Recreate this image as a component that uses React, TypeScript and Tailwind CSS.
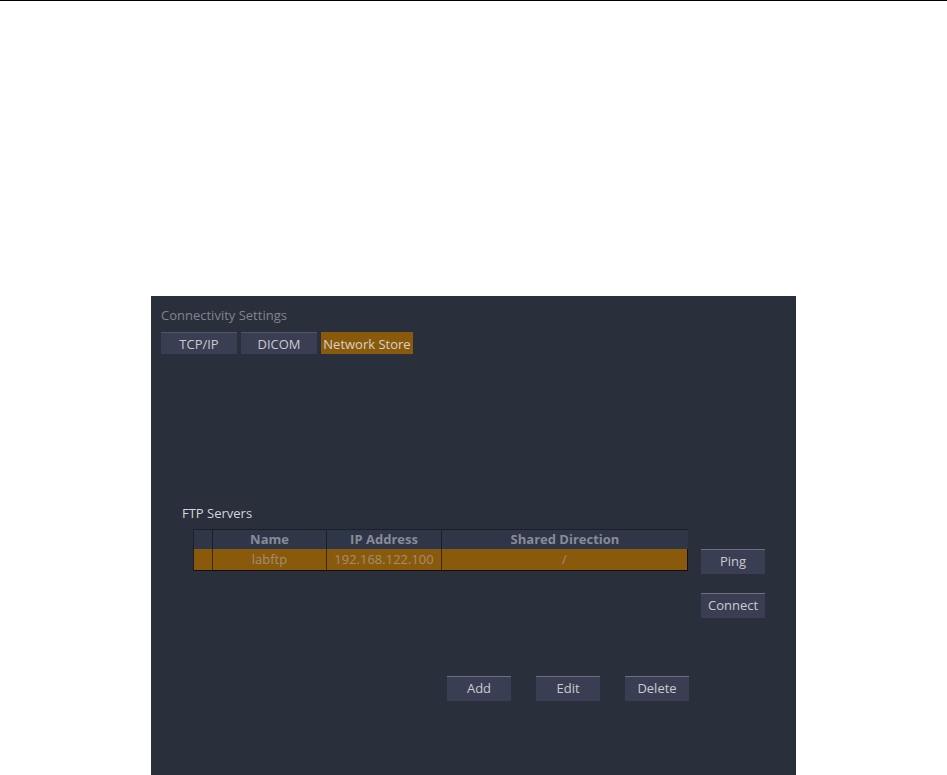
import React from 'react';

const font = { fontFamily: '"Open Sans", "Noto Sans", "Liberation Sans", sans-serif' };

// Flat Qt-style push button
const PanelButton = ({ label, className }: { label: string; className?: string }) => (
  <div
    className={`w-[64px] h-[25px] bg-[#393e52] border-t border-[#6b6f7f] flex items-center justify-center text-[13px] text-[#c9cbd1] ${className ?? ''}`}
  >
    {label}
  </div>
);

const Tab = ({ label, active, width }: { label: string; active?: boolean; width: string }) => (
  <div
    className={`${width} h-[22px] pt-[3px] flex items-center justify-center text-[13px] ${
      active ? 'bg-[#8a5a0c] text-[#d6d2c8]' : 'bg-[#393e52] border-t border-[#4f5466] text-[#c9cbd1]'
    }`}
  >
    {label}
  </div>
);

const columns = [
  { label: '', width: 'w-[19px]' },
  { label: 'Name', width: 'w-[114px]' },
  { label: 'IP Address', width: 'w-[115px]' },
  { label: 'Shared Direction', width: 'flex-1' },
];

const row = ['', 'labftp', '192.168.122.100', '/'];

export default function App() {
  return (
    <div className="min-h-[775px] bg-white overflow-hidden" style={font}>
      <div className="h-px bg-black" />
      <div className="ml-[151px] mt-[295px] w-[645px] h-[479px] bg-[#292f3b] pl-[10px] pt-[10px]">
        <div className="text-[13px] leading-[18px] text-[#80858f]">Connectivity Settings</div>

        {/* tabs */}
        <div className="mt-[8px] flex gap-[4px]">
          <Tab label="TCP/IP" width="w-[76px]" />
          <Tab label="DICOM" width="w-[76px]" />
          <Tab label="Network Store" width="w-[92px]" active />
        </div>

        <div className="mt-[150px] ml-[21px] text-[13px] leading-[18px] text-[#d3d5da]">FTP Servers</div>

        <div className="mt-[7px] flex">
          {/* table */}
          <div className="ml-[32px] w-[495px] h-[42px] border border-[#1b1f27] border-r-0 border-b-0">
            <div className="flex h-[19px] bg-[#2f3647]">
              {columns.map((c, i) => (
                <div
                  key={i}
                  className={`${c.width} ${i < 3 ? 'border-r border-[#1b1f27]' : ''} flex items-center justify-center text-[13px] font-bold text-[#878c97]`}
                >
                  {c.label}
                </div>
              ))}
            </div>
            <div className="flex h-[22px] bg-[#8a5a0c] border-b border-r border-[#15110a]">
              {columns.map((c, i) => (
                <div
                  key={i}
                  className={`${c.width} ${i < 3 ? 'border-r border-[#3d2a0c]' : ''} flex items-center justify-center text-[13px] text-[#a08f73]`}
                >
                  {row[i]}
                </div>
              ))}
            </div>
          </div>

          {/* side buttons */}
          <div className="ml-[13px] mt-[20px] flex flex-col gap-[19px]">
            <PanelButton label="Ping" />
            <PanelButton label="Connect" />
          </div>
        </div>

        <div className="mt-[58px] ml-[286px] flex gap-[25px]">
          <PanelButton label="Add" />
          <PanelButton label="Edit" />
          <PanelButton label="Delete" />
        </div>
      </div>
    </div>
  );
}
